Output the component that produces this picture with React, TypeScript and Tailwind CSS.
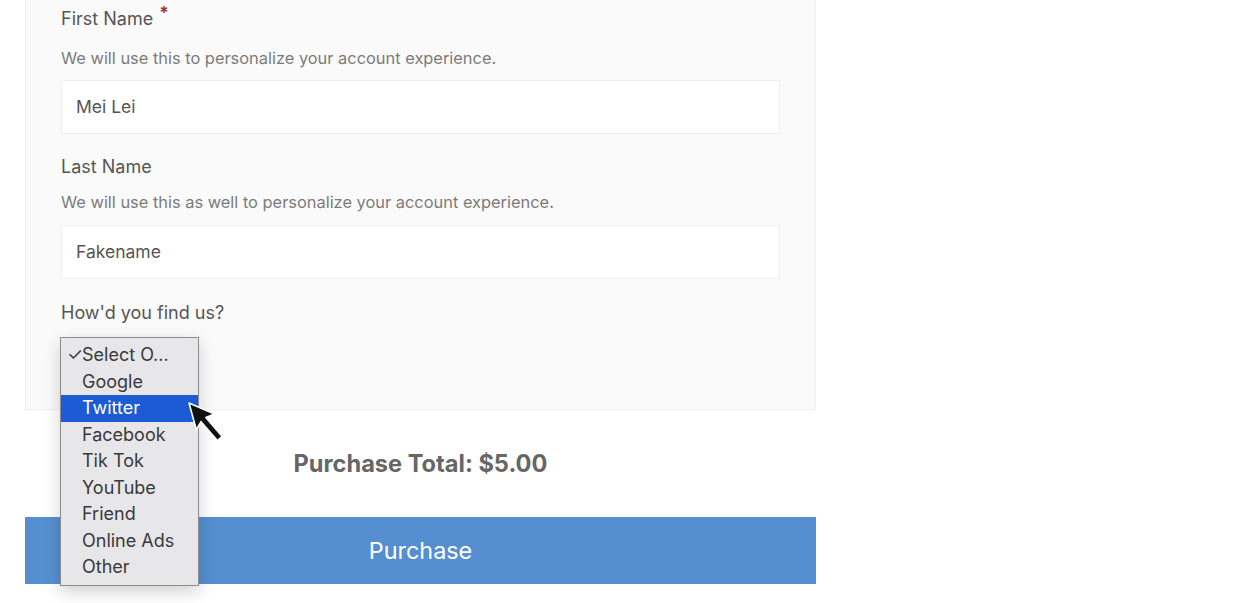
import React from 'react'

const options = ['Google', 'Twitter', 'Facebook', 'Tik Tok', 'YouTube', 'Friend', 'Online Ads', 'Other']

function Cursor() {
  return (
    <svg width="50" height="54" viewBox="0 0 50 54" className="absolute left-[182px] top-[397px]">
      <g transform="translate(7 6) rotate(-41)">
        <path
          d="M0 0 L12 25 L3.2 22 L3.2 47 L-3.2 47 L-3.2 22 L-12 25 Z"
          fill="#111"
          stroke="#fff"
          strokeWidth="1.6"
          strokeLinejoin="round"
        />
      </g>
    </svg>
  )
}

function Dropdown() {
  return (
    <div className="absolute left-[60px] top-[337px] w-[139px] bg-[#e7e7ea] border border-[#8c8c8c] shadow-[0_6px_16px_rgba(0,0,0,0.18)] py-[4px] text-[18px] leading-[26.5px] text-[#3a3a3a] flex flex-col">
      <div className="flex whitespace-nowrap">
        <span className="w-[21px] pl-[6px]">✓</span>
        <span>Select O...</span>
      </div>
      {options.map(o => (
        <div key={o} className={`pl-[21px] pr-[4px] ${o === 'Twitter' ? 'bg-[#1c5bd4] text-white' : ''}`}>{o}</div>
      ))}
    </div>
  )
}

function Field({ label, required, hint, value, hintGap, inputGap }: { label: string; required?: boolean; hint: string; value: string; hintGap: string; inputGap: string }) {
  return (
    <div className="flex flex-col">
      <div className="text-[18px] leading-[24px] text-[#555]">
        {label}
        {required && <span className="ml-[6px] text-[#9c3a31] text-[17px] font-bold align-top relative top-[-6px]">*</span>}
      </div>
      <p className={`${hintGap} text-[16.4px] leading-[22px] text-[#7a7a7a]`}>{hint}</p>
      <div className={`${inputGap} h-[54px] bg-white border border-[#efefef] px-[14px] flex items-center text-[17.5px] text-[#555]`}>{value}</div>
    </div>
  )
}

export default function App() {
  return (
    <div className="relative w-[1240px] h-[603px] bg-white overflow-hidden font-['Inter',sans-serif]">
      <div className="ml-[25px] w-[791px] flex flex-col">
        <div className="bg-[#fafafa] border-x border-b border-[#eeeeee] px-[35px] pt-[7px] pb-[42px] flex flex-col gap-[21px]">
          <Field label="First Name" required hint="We will use this to personalize your account experience." value="Mei Lei" hintGap="mt-[16px]" inputGap="mt-[11px]" />
          <Field label="Last Name" hint="We will use this as well to personalize your account experience." value="Fakename" hintGap="mt-[12px]" inputGap="mt-[12px]" />
          <div className="mt-[1px] flex flex-col gap-[18px]">
            <div className="text-[18px] leading-[24px] text-[#555]">How'd you find us?</div>
            <div className="h-[24px] w-[138px]" />
          </div>
        </div>

        <div className="mt-[39px] text-center text-[23.6px] leading-[30px] font-bold text-[#666]">Purchase Total: $5.00</div>
        <button className="mt-[38px] w-full h-[67px] bg-[#558fd1] text-white text-[23.4px]">Purchase</button>
      </div>

      <Dropdown />
      <Cursor />
    </div>
  )
}
